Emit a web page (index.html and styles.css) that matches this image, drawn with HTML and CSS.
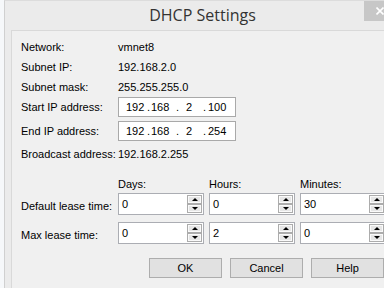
FILE: index.html
```html
<!DOCTYPE html>
<html lang="en">
  <head>
    <meta charset="UTF-8" />
    <meta name="viewport" content="width=device-width, initial-scale=1.0" />
    <title>DHCP Settings</title>
    <link rel="stylesheet" href="styles.css">
  </head>
  <body>
    <div class="window">
      <header class="titlebar">
        <h1>DHCP Settings</h1>
        <button class="close" aria-label="Close">
          <svg width="8" height="8" viewBox="0 0 8 8">
            <path d="M0.5 0.5 L7.5 7.5 M7.5 0.5 L0.5 7.5" stroke="#fff" stroke-width="1.6" />
          </svg>
        </button>
      </header>
      <main class="client">
        <div class="row"><span class="label">Network:</span><span>vmnet8</span></div>
        <div class="row"><span class="label">Subnet IP:</span><span>192.168.2.0</span></div>
        <div class="row"><span class="label">Subnet mask:</span><span>255.255.255.0</span></div>
        <div class="row">
          <span class="label">Start IP address:</span>
          <div class="ip">
            <span class="seg s1">192</span><span class="dot d1">.</span><span class="seg s2">168</span><span class="dot d2">.</span><span class="seg s3">2</span><span class="dot d3">.</span><span class="seg">100</span>
          </div>
        </div>
        <div class="row next">
          <span class="label">End IP address:</span>
          <div class="ip">
            <span class="seg s1">192</span><span class="dot d1">.</span><span class="seg s2">168</span><span class="dot d2">.</span><span class="seg s3">2</span><span class="dot d3">.</span><span class="seg">254</span>
          </div>
        </div>
        <div class="row broadcast"><span class="label">Broadcast address:</span><span>192.168.2.255</span></div>

        <div class="lease-row lease-head">
          <span></span><span>Days:</span><span>Hours:</span><span>Minutes:</span>
        </div>
        <div class="lease-row spin-row">
          <span class="label">Default lease time:</span>
          <div class="spin"><span class="val">0</span><span class="arrows"><i class="arrow up"></i><i class="arrow down"></i></span></div>
          <div class="spin"><span class="val">0</span><span class="arrows"><i class="arrow up"></i><i class="arrow down"></i></span></div>
          <div class="spin"><span class="val">30</span><span class="arrows"><i class="arrow up"></i><i class="arrow down"></i></span></div>
        </div>
        <div class="lease-row spin-row">
          <span class="label">Max lease time:</span>
          <div class="spin"><span class="val">0</span><span class="arrows"><i class="arrow up"></i><i class="arrow down"></i></span></div>
          <div class="spin"><span class="val">2</span><span class="arrows"><i class="arrow up"></i><i class="arrow down"></i></span></div>
          <div class="spin"><span class="val">0</span><span class="arrows"><i class="arrow up"></i><i class="arrow down"></i></span></div>
        </div>

        <div class="buttons">
          <button class="btn">OK</button>
          <button class="btn">Cancel</button>
          <button class="btn">Help</button>
        </div>
      </main>
    </div>
  </body>
</html>
```

FILE: styles.css
```css
body {
  margin: 0;
  height: 288px;
  overflow: hidden;
  background: #f6f8fa;
  font-family: "Liberation Sans", Arial, sans-serif;
  font-size: 11px;
  color: #000;
}

.window {
  position: relative;
  margin-left: 4px;
  width: 379px;
  height: 287px;
  overflow: hidden;
  background: #ebebeb;
  border-left: 1px solid #d0d0d0;
  border-top: 1px solid #dcdcdc;
  display: flex;
  flex-direction: column;
}

.titlebar {
  height: 29px;
  flex: none;
  display: flex;
  justify-content: center;
  padding-left: 16px;
}

.titlebar h1 {
  margin: 0;
  font-family: "Open Sans", "Noto Sans", sans-serif;
  font-size: 16px;
  font-weight: normal;
  line-height: 28px;
  color: #333;
}

.close {
  position: absolute;
  top: 0;
  right: 0;
  width: 20px;
  height: 20px;
  padding: 0 0 0 12px;
  border: 0;
  background: #c7c7c7;
  display: flex;
  align-items: center;
}

.client {
  flex: 1;
  overflow: hidden;
  margin-left: 6px;
  padding: 6px 0 0 9px;
  background: #f0f0f0;
  border-left: 1px solid #d9d9d9;
  border-top: 1px solid #d9d9d9;
}

.row {
  display: flex;
  align-items: center;
  height: 20px;
}

.row.next {
  margin-top: 4px;
}

.row.broadcast {
  margin-top: 3px;
}

.label {
  width: 97px;
  flex: none;
  white-space: nowrap;
}

.ip {
  width: 118px;
  height: 20px;
  box-sizing: border-box;
  padding-left: 7px;
  border: 1px solid #a9a9a9;
  background: #fff;
  display: flex;
  align-items: center;
}

.ip span {
  flex: none;
}

.s1 { width: 21px; }
.d1 { width: 4px; }
.s2 { width: 25px; }
.d2 { width: 10px; }
.s3 { width: 17px; }
.d3 { width: 5px; }

.lease-row {
  display: grid;
  grid-template-columns: 92px 86px 86px 86px;
  column-gap: 5px;
  align-items: center;
}

.lease-row .label {
  width: auto;
}

.lease-head {
  margin-top: 10px;
  height: 19px;
}

.spin-row {
  height: 22px;
}

.spin-row + .spin-row {
  margin-top: 7px;
}

.spin-row .label {
  padding-top: 3px;
}

.spin {
  height: 22px;
  box-sizing: border-box;
  padding: 1px 1px 0 0;
  border: 1px solid #abadb3;
  background: #fff;
  display: flex;
}

.spin .val {
  flex: 1;
  padding-left: 3px;
  line-height: 19px;
}

.arrows {
  width: 15px;
  display: flex;
  flex-direction: column;
}

.arrow {
  height: 9px;
  box-sizing: border-box;
  border: 1px solid #acacac;
  background: #e6e6e6;
  box-shadow: inset 0 0 0 1px #fafafa;
  display: flex;
  align-items: center;
  justify-content: center;
}

.arrow::after {
  content: "";
  border-left: 3px solid transparent;
  border-right: 3px solid transparent;
}

.arrow.up::after {
  border-bottom: 3px solid #000;
}

.arrow.down::after {
  border-top: 3px solid #000;
}

.buttons {
  margin-top: 14px;
  display: flex;
  justify-content: flex-end;
  gap: 8px;
}

.btn {
  width: 73px;
  height: 20px;
  flex: none;
  padding: 0;
  border: 1px solid #adadad;
  background: #e1e1e1;
  font: inherit;
  color: #000;
}
```
